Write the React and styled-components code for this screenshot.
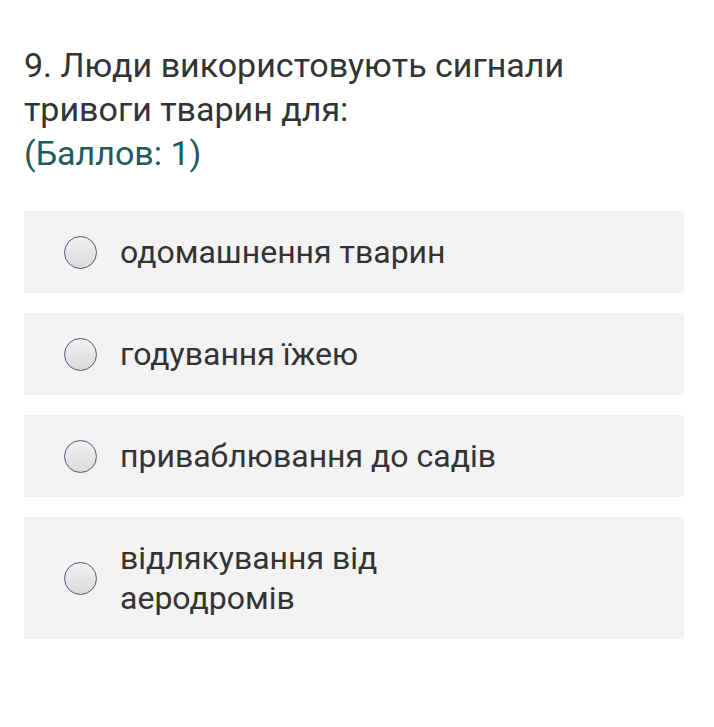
import styled, { createGlobalStyle } from "styled-components";

const GlobalStyle = createGlobalStyle`
    body {
        margin: 0;
        background-color: #FFFFFF;
        font-family: Roboto, "Noto Sans", sans-serif;
    }
`;

const options = [
    "одомашнення тварин",
    "годування їжею",
    "приваблювання до садів",
    "відлякування від аеродромів",
];

function Option({ text }) {
    return (
        <Card>
            <Radio />
            <OptionText>{text}</OptionText>
        </Card>
    );
}

export default function App() {
    return (
        <>
            <GlobalStyle />
            <Page>
                <Question>
                    9. Люди використовують сигнали тривоги тварин для:
                    <Points>(Баллов: 1)</Points>
                </Question>
                <List>
                    {options.map(option => <Option key={option} text={option} />)}
                </List>
            </Page>
        </>
    );
}

const Page = styled.div`
    padding: 43px 24px 0 24px;
    width: 660px;
`;

const Question = styled.h2`
    margin: 0;
    max-width: 580px;

    font-size: 34px;
    font-weight: 400;
    line-height: 44px;
    color: #333333;
`;

const Points = styled.span`
    display: block;
    color: #1E5B5B;
`;

const List = styled.ul`
    list-style: none;
    margin: 0;
    margin-top: 36px;
    padding: 0;

    display: flex;
    flex-direction: column;
    gap: 20px;
`;

const Card = styled.li`
    background-color: #F3F3F3;

    padding: 21px 20px 21px 40px;

    display: flex;
    align-items: center;
    gap: 23px;
`;

const Radio = styled.span`
    flex-shrink: 0;
    width: 31px;
    height: 31px;
    border-radius: 50%;
    border: 1.5px solid #4C5C72;
    background: linear-gradient(#F2F2F2, #DADADA);
`;

const OptionText = styled.span`
    max-width: 400px;

    font-size: 32px;
    line-height: 40px;
    color: #333333;
`;
